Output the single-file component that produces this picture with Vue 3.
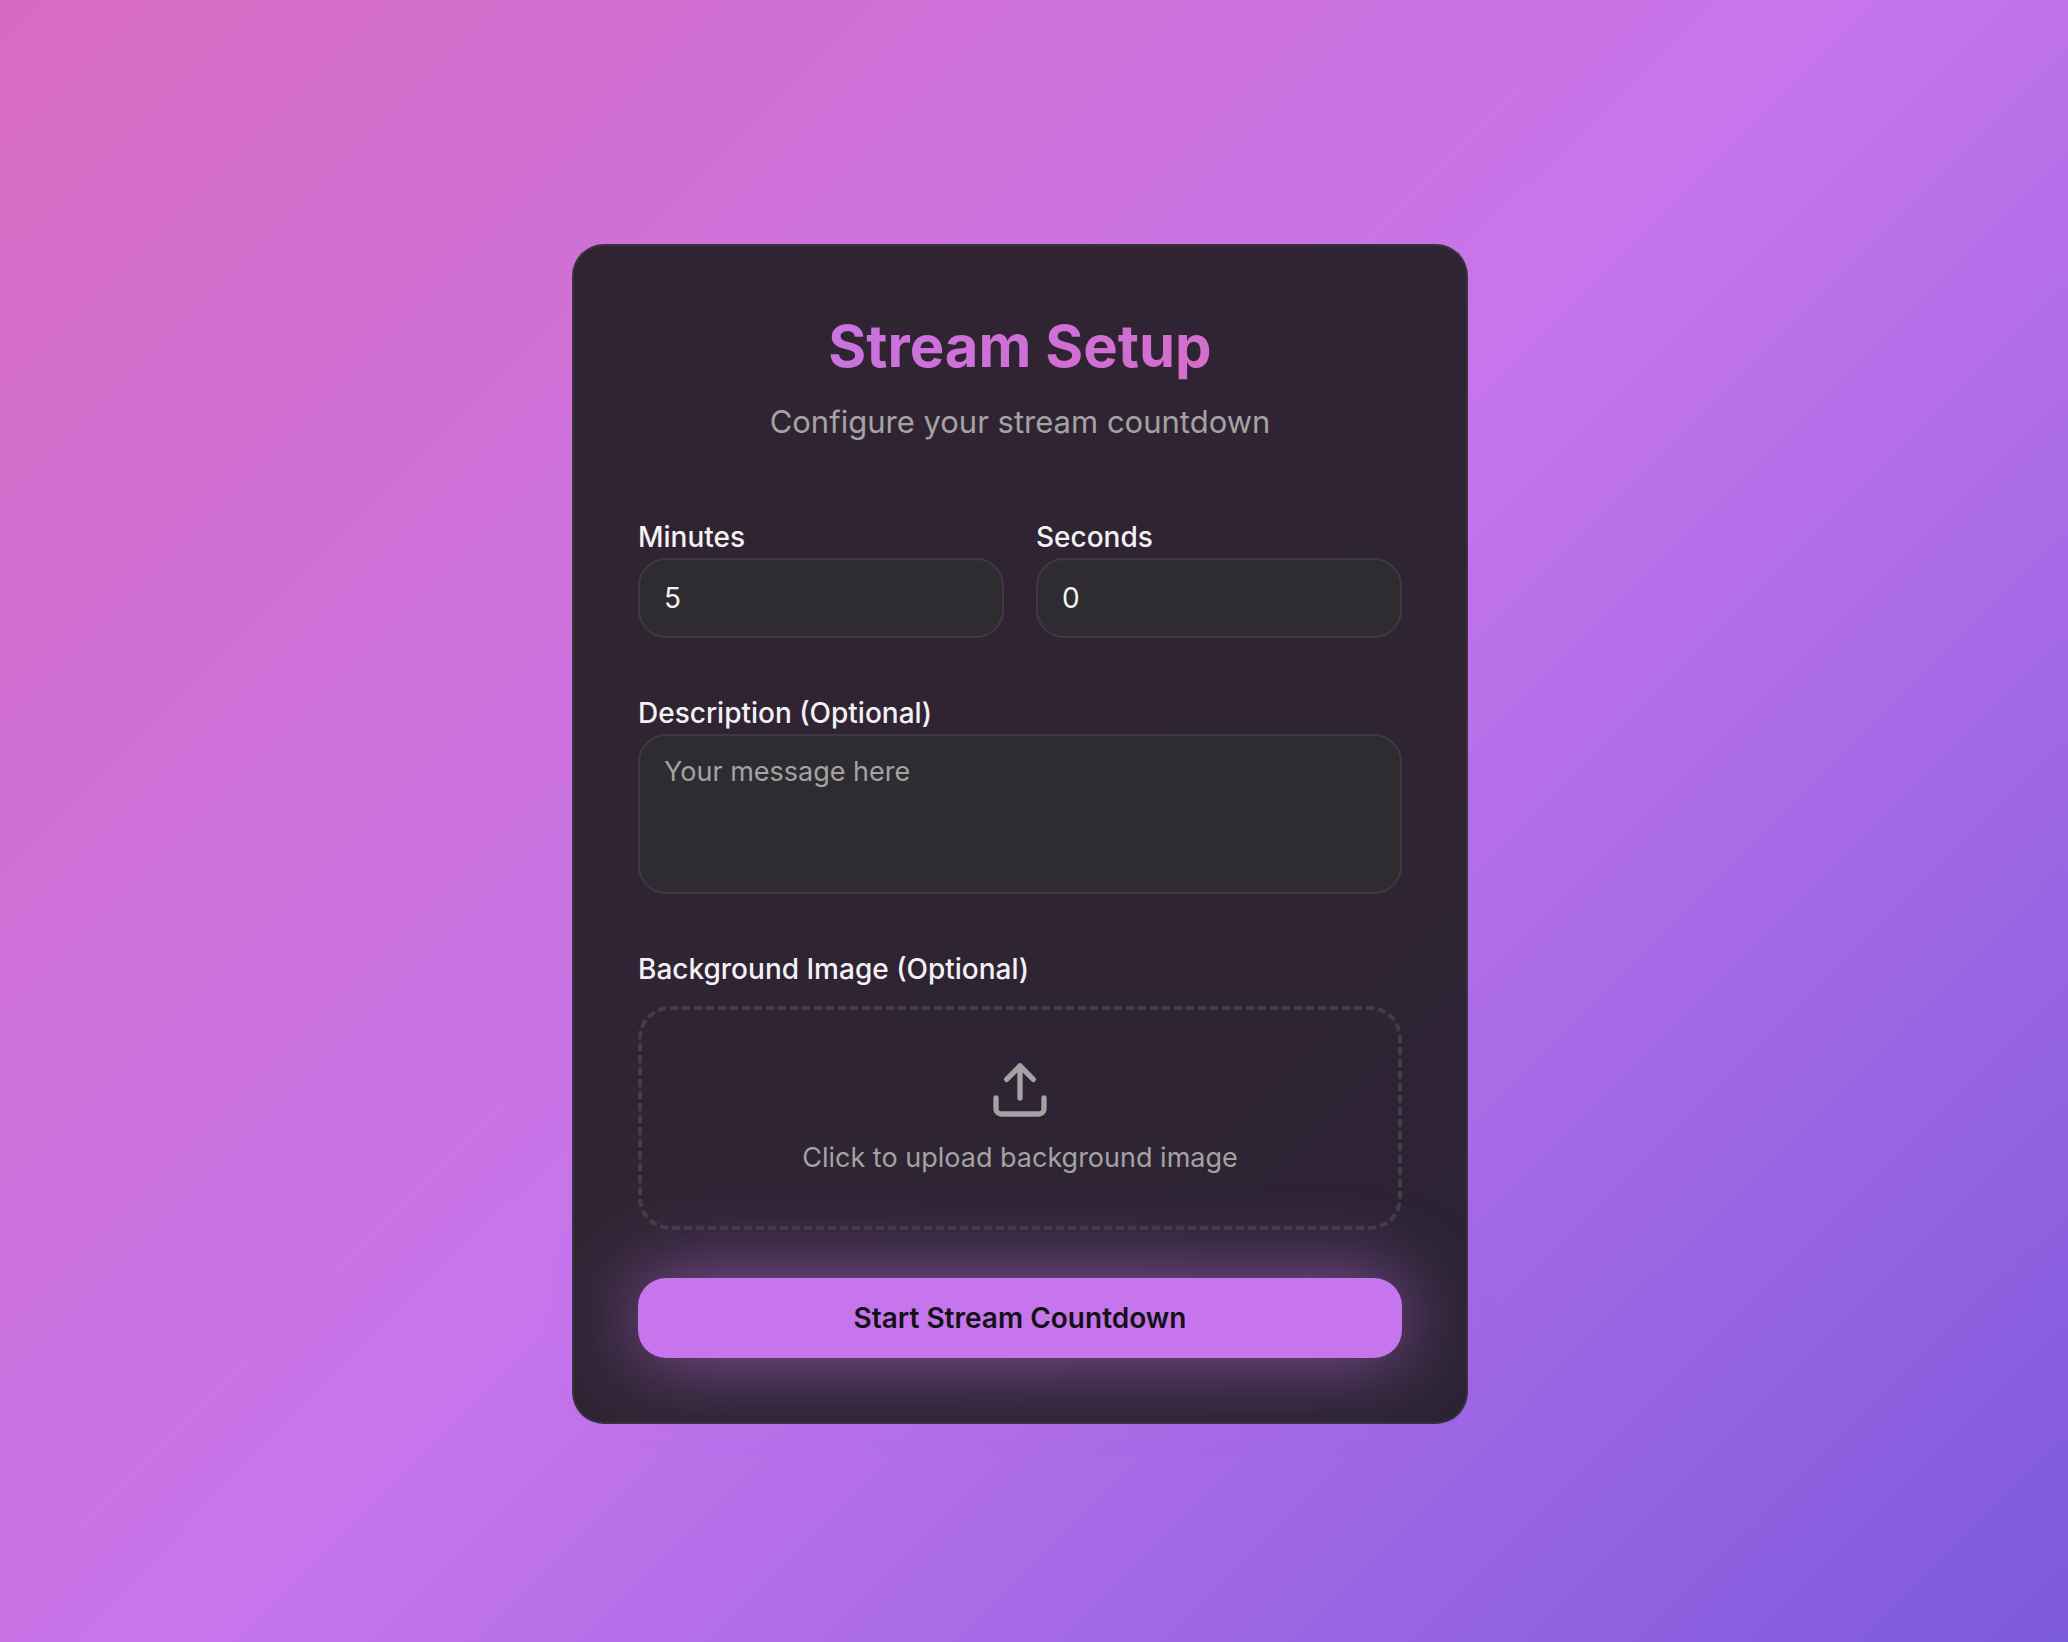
<script setup>
import { ref } from 'vue'

const minutes = ref(5)
const seconds = ref(0)
const description = ref('')
</script>

<template>
  <main class="page">
    <section class="card">
      <header class="header">
        <h1 class="title">Stream Setup</h1>
        <p class="subtitle">Configure your stream countdown</p>
      </header>

      <form class="form" @submit.prevent>
        <div class="row">
          <div class="field">
            <label class="label" for="minutes">Minutes</label>
            <input id="minutes" v-model="minutes" class="control input" type="number" min="0" />
          </div>
          <div class="field">
            <label class="label" for="seconds">Seconds</label>
            <input id="seconds" v-model="seconds" class="control input" type="number" min="0" max="59" />
          </div>
        </div>

        <div class="field">
          <label class="label" for="description">Description (Optional)</label>
          <textarea
            id="description"
            v-model="description"
            class="control textarea"
            placeholder="Your message here"
          ></textarea>
        </div>

        <div class="field upload-field">
          <label class="label" for="background">Background Image (Optional)</label>
          <label class="dropzone" for="background">
            <svg class="icon" viewBox="0 0 24 24" aria-hidden="true">
              <path d="M21 15v4a2 2 0 0 1-2 2H5a2 2 0 0 1-2-2v-4" />
              <polyline points="17 8 12 3 7 8" />
              <line x1="12" y1="3" x2="12" y2="15" />
            </svg>
            <span>Click to upload background image</span>
          </label>
          <input id="background" class="file" type="file" accept="image/*" />
        </div>

        <button class="submit" type="submit">Start Stream Countdown</button>
      </form>
    </section>
  </main>
</template>

<style>
body {
  margin: 0;
}
</style>

<style scoped>
.page {
  box-sizing: border-box;
  min-height: 100vh;
  padding: 26px 28px 0 0;
  display: flex;
  align-items: center;
  justify-content: center;
  background: linear-gradient(135deg, #d76bc1 0%, #c675ec 50%, #7c5adc 100%);
  font-family: Inter, "Liberation Sans", sans-serif;
  font-size: 27px;
  line-height: 40px;
  color: #f2f2f2;
}

.card {
  box-sizing: border-box;
  width: 100%;
  max-width: 896px;
  padding: 64px;
  border: 2px solid rgba(64, 60, 66, 0.6);
  border-radius: 32px;
  background: rgba(31, 28, 32, 0.9);
}

.header {
  margin-bottom: 64px;
  text-align: center;
}

.title {
  margin: 0 0 16px;
  font-size: 58px;
  font-weight: 700;
  line-height: 72px;
  color: transparent;
  background: linear-gradient(135deg, #c675ec, #d76bc1);
  -webkit-background-clip: text;
  background-clip: text;
}

.subtitle {
  margin: 0;
  font-size: 31px;
  line-height: 48px;
  color: #a3a3a3;
}

.form {
  display: flex;
  flex-direction: column;
  gap: 48px;
}

.row {
  display: grid;
  grid-template-columns: 1fr 1fr;
  gap: 32px;
}

.field {
  display: flex;
  flex-direction: column;
  min-width: 0;
}

.label {
  padding-top: 6px;
  font-size: 28px;
  font-weight: 500;
  line-height: 42px;
}

.control {
  box-sizing: border-box;
  width: 100%;
  margin: 0;
  padding: 16px 24px;
  border: 2px solid #3f3a42;
  border-radius: 28px;
  background: #2e2b31;
  color: #f2f2f2;
  font: inherit;
  outline: none;
}

.control::placeholder {
  color: #a3a3a3;
  opacity: 1;
}

.input {
  height: 80px;
  font-size: 28px;
  appearance: textfield;
}

.input::-webkit-inner-spin-button {
  display: none;
}

.textarea {
  display: block;
  height: 160px;
  resize: none;
}

.upload-field {
  position: relative;
}

.dropzone {
  display: flex;
  flex-direction: column;
  align-items: center;
  gap: 16px;
  margin-top: 16px;
  padding: 48px;
  border: 4px dashed #443d47;
  border-radius: 32px;
  color: #a3a3a3;
  cursor: pointer;
}

.icon {
  width: 64px;
  height: 64px;
  fill: none;
  stroke: currentColor;
  stroke-width: 2;
  stroke-linecap: round;
  stroke-linejoin: round;
}

.file {
  position: absolute;
  width: 1px;
  height: 1px;
  opacity: 0;
  pointer-events: none;
}

.submit {
  height: 80px;
  padding: 0 32px;
  border: 0;
  border-radius: 28px;
  background: #c675ec;
  box-shadow: 0 0 80px rgba(198, 117, 236, 0.6);
  color: #141216;
  font: inherit;
  font-size: 28px;
  font-weight: 600;
  cursor: pointer;
}
</style>
